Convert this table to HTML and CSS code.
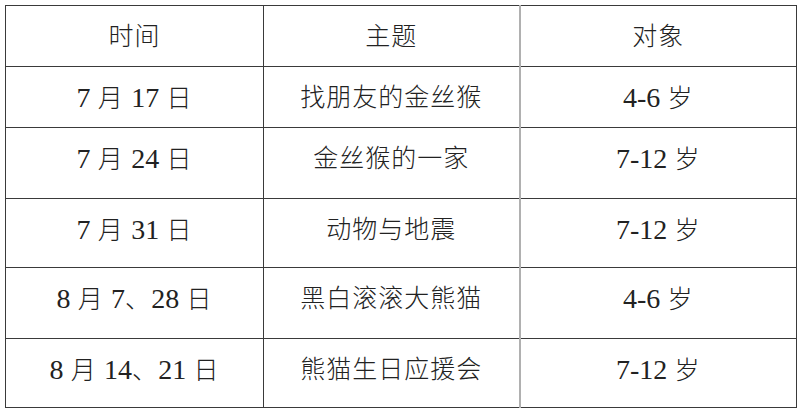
FILE: index.html
```html
<!DOCTYPE html>
<html lang="zh">
<head>
<meta charset="utf-8">
<link rel="stylesheet" href="styles.css">
</head>
<body>
<table class="schedule">
  <tr class="row-h"><td class="c1">时间</td><td class="c2">主题</td><td class="c3">对象</td></tr>
  <tr class="row-a"><td class="c1"><span class="n">7</span> 月 <span class="n">17</span> 日</td><td class="c2">找朋友的金丝猴</td><td class="c3"><span class="n">4-6</span> 岁</td></tr>
  <tr class="row-b"><td class="c1"><span class="n">7</span> 月 <span class="n">24</span> 日</td><td class="c2">金丝猴的一家</td><td class="c3"><span class="n">7-12</span> 岁</td></tr>
  <tr class="row-c"><td class="c1"><span class="n">7</span> 月 <span class="n">31</span> 日</td><td class="c2">动物与地震</td><td class="c3"><span class="n">7-12</span> 岁</td></tr>
  <tr class="row-b"><td class="c1"><span class="n">8</span> 月 <span class="n">7</span>、<span class="n">28</span> 日</td><td class="c2">黑白滚滚大熊猫</td><td class="c3"><span class="n">4-6</span> 岁</td></tr>
  <tr class="row-c"><td class="c1"><span class="n">8</span> 月 <span class="n">14</span>、<span class="n">21</span> 日</td><td class="c2">熊猫生日应援会</td><td class="c3"><span class="n">7-12</span> 岁</td></tr>
</table>
</body>
</html>
```
FILE: styles.css
```css
html, body {
  margin: 0;
  padding: 0;
  background: #ffffff;
}
body {
  padding: 5px 0 0 5px;
  font-family: "Liberation Serif", "Noto Sans CJK SC", serif;
  font-weight: 300;
  color: #222222;
}
.schedule {
  border-collapse: collapse;
  table-layout: fixed;
  width: 791px;
}
.schedule td {
  border: 1px solid #3a3a3a;
  text-align: center;
  vertical-align: top;
  font-size: 25px;
  line-height: 30px;
  padding: 16px 0 0 0;
  letter-spacing: 1px;
  box-sizing: border-box;
  white-space: nowrap;
}
.n {
  font-size: 28px;
  font-weight: 400;
  letter-spacing: 0;
}
.c1 { width: 258px; }
.c2 { width: 256px; }
.c3 { width: 277px; border-left: 2px solid #b0b0b0 !important; }
.row-h td, .row-a td { height: 61px; }
.row-b td { height: 71px; }
.row-c td { height: 69px; }
```
